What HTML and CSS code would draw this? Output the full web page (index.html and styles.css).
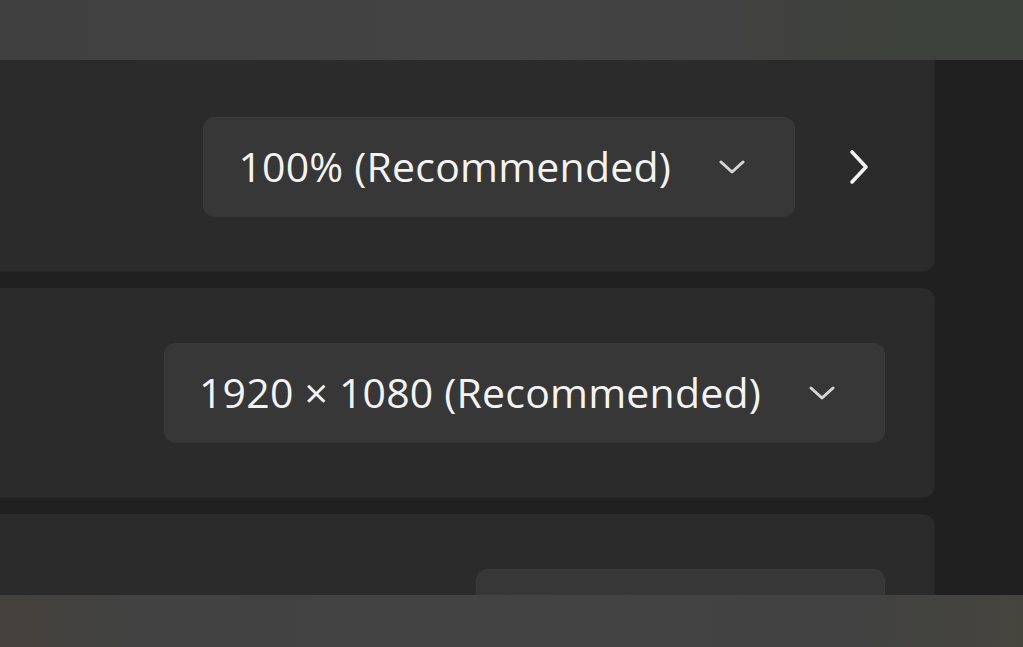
FILE: index.html
```html
<!DOCTYPE html>
<html lang="en">
<head>
<meta charset="utf-8">
<title>Display settings</title>
<link rel="stylesheet" href="styles.css">
</head>
<body>
<div class="screen">
  <div class="band band-top"></div>
  <div class="main">
    <div class="cards">
      <div class="card card-first">
        <div class="combo">
          <span class="combo-text">100% (Recommended)</span>
          <svg class="chev-down" width="26" height="14" viewBox="0 0 26 14"><path d="M2 2 L13 12 L24 2" fill="none" stroke="#d6d6d6" stroke-width="3" stroke-linecap="round" stroke-linejoin="round"/></svg>
        </div>
        <svg class="chev-right" width="20" height="36" viewBox="0 0 20 36"><path d="M3 3 L17 18 L3 33" fill="none" stroke="#f2f2f2" stroke-width="3.6" stroke-linecap="round" stroke-linejoin="round"/></svg>
      </div>
      <div class="card">
        <div class="combo">
          <span class="combo-text">1920 × 1080 (Recommended)</span>
          <svg class="chev-down" width="26" height="14" viewBox="0 0 26 14"><path d="M2 2 L13 12 L24 2" fill="none" stroke="#d6d6d6" stroke-width="3" stroke-linecap="round" stroke-linejoin="round"/></svg>
        </div>
      </div>
      <div class="card card-last">
        <div class="combo combo-short"></div>
      </div>
    </div>
    <div class="side"></div>
  </div>
  <div class="band band-bottom"></div>
</div>
</body>
</html>
```
FILE: styles.css
```css
* { box-sizing: border-box; }
html, body {
  margin: 0;
  padding: 0;
  background: #202020;
}
.screen {
  width: 1023px;
  height: 647px;
  display: flex;
  flex-direction: column;
  overflow: hidden;
  font-family: "Open Sans", "Noto Sans", sans-serif;
}
.band {
  flex: none;
}
.band-top {
  height: 60px;
  background: linear-gradient(90deg, #404040 0%, #434343 45%, #424242 70%, #3e413c 85%, #3d423d 100%);
}
.band-bottom {
  height: 52px;
  background: linear-gradient(90deg, #45413c 0%, #424242 12%, #434343 50%, #424242 85%, #46453d 100%);
}
.main {
  flex: 1;
  display: flex;
  overflow: hidden;
  background: #202020;
}
.cards {
  width: 935px;
  flex: none;
  display: flex;
  flex-direction: column;
  gap: 16px;
}
.side {
  flex: 1;
  background: #202020;
}
.card {
  flex: none;
  height: 210px;
  background: #2b2b2b;
  border-radius: 0 12px 12px 0;
  display: flex;
  align-items: center;
  justify-content: flex-end;
  padding-right: 50px;
  box-shadow: inset -1px 0 0 #262626, inset 0 -1px 0 #262626;
}
.card-first {
  height: 212px;
  padding-top: 2px;
  border-radius: 0 0 12px 0;
  padding-right: 66px;
  gap: 54px;
}
.card-last {
  align-items: flex-start;
  padding-top: 55px;
}
.combo {
  height: 100px;
  background: #373737;
  border: 1px solid #3b3b3b;
  border-bottom-color: #343434;
  border-radius: 12px;
  display: flex;
  align-items: center;
  padding: 0 49px 0 34px;
  gap: 48px;
  color: #f3f3f3;
}
.combo-text {
  font-size: 41px;
  line-height: 1;
  letter-spacing: 0.2px;
  white-space: nowrap;
  position: relative;
  top: -1px;
}
.chev-down {
  flex: none;
  display: block;
}
.chev-right {
  flex: none;
  display: block;
}
.combo-short {
  width: 409px;
  height: 100px;
}
```
